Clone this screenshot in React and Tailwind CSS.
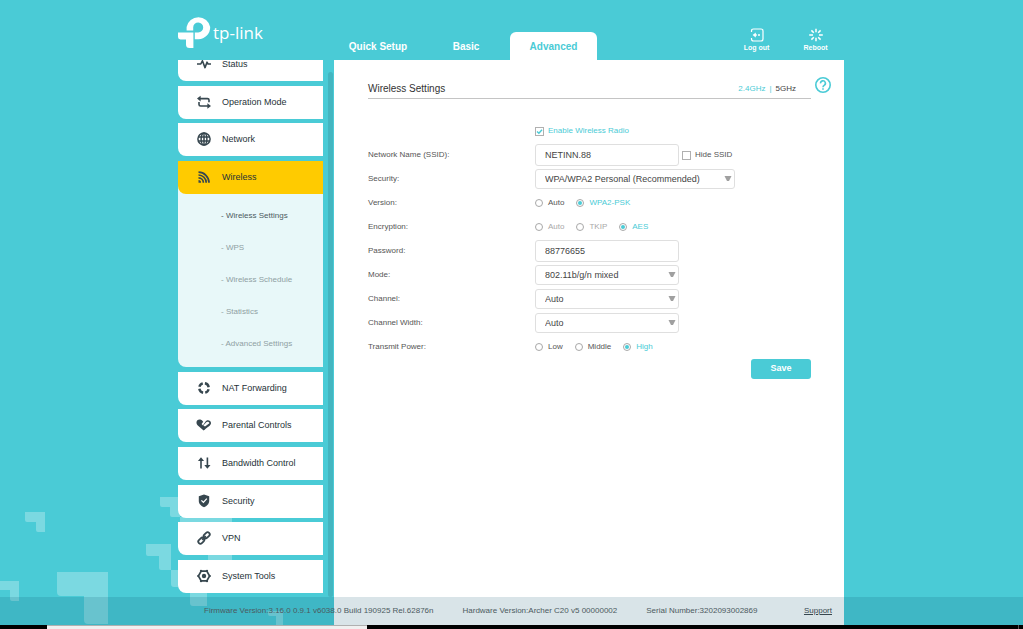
import React from "react";

const cyanText = "text-[#4acbd6]";

function StatusIcon() {
  return (
    <svg viewBox="0 0 14 14" className="size-3.5" fill="none" stroke="currentColor" strokeWidth="1.6" strokeLinejoin="round">
      <path d="M0 7H3.8L5.4 3.8L8 10.6L10 5.2L11 7H14" />
    </svg>
  );
}

function ModeIcon() {
  return (
    <svg viewBox="0 0 14 14" className="size-3.5" fill="none" stroke="currentColor" strokeWidth="1.6">
      <path d="M3 3.6H10.5Q12 3.6 12 5.1V7.2" />
      <path d="M11 11H3.6Q2 11 2 9.4V7" />
      <path d="M3.6 0.8L0 3.6L3.6 6.4Z" fill="currentColor" stroke="none" />
      <path d="M10.4 8.2L14 11L10.4 13.8Z" fill="currentColor" stroke="none" />
    </svg>
  );
}

function GlobeIcon() {
  return (
    <svg viewBox="0 0 14 14" className="size-3.5" fill="none" stroke="currentColor" strokeWidth="1.5">
      <circle cx="7" cy="7" r="6.1" />
      <ellipse cx="7" cy="7" rx="2.9" ry="6.1" />
      <path d="M7 1V13M1 4.9H13M1 9.1H13" />
    </svg>
  );
}

function WirelessIcon() {
  return (
    <svg viewBox="0 0 14 14" className="size-3.5" fill="none" stroke="currentColor" strokeWidth="1.7">
      <path d="M1.5 2.2A10.5 10.5 0 0 1 12 12.7" />
      <path d="M1.5 5A7.7 7.7 0 0 1 9.2 12.7" />
      <path d="M1.5 7.8A4.9 4.9 0 0 1 6.4 12.7" />
      <path d="M1.5 10.1A2.6 2.6 0 0 1 4.1 12.7H1.5Z" fill="currentColor" stroke="none" />
    </svg>
  );
}

function NatIcon() {
  return (
    <svg viewBox="0 0 14 14" className="size-3.5" fill="none" stroke="currentColor" strokeWidth="2.4">
      <path d="M7.9 2.3A4.8 4.8 0 0 1 11.7 6.2" />
      <path d="M11.6 8.2A4.8 4.8 0 0 1 8.2 11.7" />
      <path d="M6.1 11.7A4.8 4.8 0 0 1 2.3 7.8" />
      <path d="M2.4 5.8A4.8 4.8 0 0 1 5.8 2.3" />
    </svg>
  );
}

function HeartsIcon() {
  return (
    <svg viewBox="0 0 16 14" className="h-3.5 w-4">
      <path d="M7.6 12.6L1.8 7.4C-1.2 4.2 1.4 0.8 4.4 1.6Q6 2 7.2 3.8L5.6 6L8.8 9.6L9.8 10.7Z" fill="currentColor" />
      <path d="M7.6 12.1L6.4 8.2L9.2 4C10.6 1.2 14.8 2 15 5C15 7.6 11.4 9.4 7.6 12.1Z" fill="currentColor" />
      <path d="M7.4 7.4L10 4.4C11 3.2 13.2 3.4 13.4 5.2L9 8.4Z" fill="white" />
    </svg>
  );
}

function BandwidthIcon() {
  return (
    <svg viewBox="0 0 14 14" className="size-3.5" fill="none" stroke="currentColor" strokeWidth="1.6">
      <path d="M4 3V12.5M10.4 1.5V11" />
      <path d="M0.9 5L4 1.2L7.1 5Z" fill="currentColor" stroke="none" />
      <path d="M7.3 9L10.4 12.8L13.5 9Z" fill="currentColor" stroke="none" />
    </svg>
  );
}

function ShieldIcon() {
  return (
    <svg viewBox="0 0 14 14" className="size-3.5">
      <path d="M7 0.4L12.2 2.2V6.8C12.2 10.2 9.8 12.2 7 13.2C4.2 12.2 1.8 10.2 1.8 6.8V2.2Z" fill="currentColor" />
      <path d="M4.4 6.4L6.4 8.4L9.8 4.6" fill="none" stroke="white" strokeWidth="1.3" />
    </svg>
  );
}

function VpnIcon() {
  return (
    <svg viewBox="0 0 14 14" className="size-3.5" fill="none" stroke="currentColor" strokeWidth="1.8">
      <rect x="-3.4" y="-2.1" width="6.8" height="4.2" rx="2.1" transform="translate(9.7 4.3) rotate(-45)" />
      <rect x="-3.4" y="-2.1" width="6.8" height="4.2" rx="2.1" transform="translate(4.3 9.7) rotate(-45)" />
      <path d="M5.2 8.8L8.8 5.2" />
    </svg>
  );
}

function GearIcon() {
  return (
    <svg viewBox="0 0 14 14" className="size-3.5">
      <path d="M4.2 2.1H9.8L12.6 7L9.8 11.9H4.2L1.4 7Z" fill="none" stroke="currentColor" strokeWidth="1.7" />
      <g fill="currentColor">
        <circle cx="4" cy="1.8" r="1.1" />
        <circle cx="10" cy="1.8" r="1.1" />
        <circle cx="4" cy="12.2" r="1.1" />
        <circle cx="10" cy="12.2" r="1.1" />
        <circle cx="1.2" cy="7" r="1.1" />
        <circle cx="12.8" cy="7" r="1.1" />
        <circle cx="7" cy="7" r="2.2" />
      </g>
    </svg>
  );
}

function Logo() {
  return (
    <a href="#home" aria-label="tp-link" className="flex items-start text-white">
      <svg viewBox="0 0 34 34" className="size-[34px]" fill="currentColor">
        <path d="M8.6 15.6V12A12 12 0 0 1 32.2 12A12 12 0 0 1 20.4 24.2H16.8V17.4H20.2A5 5 0 1 0 15.2 12.2V15.6Z" />
        <path d="M0 17.4H15.4V33H11.5Q8 33 8 29.5V24.4H2.5Q0 24.4 0 22Z" />
      </svg>
      <span className="mt-[6px] ml-px font-['Open_Sans',sans-serif] text-[17px] leading-6 font-medium">tp-link</span>
    </a>
  );
}

function Backdrop() {
  return (
    <svg viewBox="0 0 300 140" className="absolute bottom-0 left-0 h-[140px] w-[300px]" fill="white" fillOpacity="0.27" aria-hidden="true">
      <path d="M25 23H45V43H38Q36 43 36 41V33H27Q25 33 25 31Z" />
      <path d="M0 92H19V112H12Q10 112 10 110V101H0Z" />
      <path d="M57 83H108V135H88Q84 135 84 131V107H61Q57 107 57 103Z" />
      <path d="M160 8H180V28H172Q170 28 170 26V18H162Q160 18 160 16Z" />
      <path d="M146 55H171V81H161Q159 81 159 79V67H148Q146 67 146 65Z" />
      <path d="M171 81H207V117H193Q190 117 190 114V98H174Q171 98 171 95Z" />
      <path d="M180 28H232V80H212Q208 80 208 76V52H184Q180 52 180 48Z" />
      <path d="M268 122H283V136H276V127H270Q268 127 268 125Z" />
    </svg>
  );
}

const menu = [
  { label: "Status", Icon: StatusIcon },
  { label: "Operation Mode", Icon: ModeIcon },
  { label: "Network", Icon: GlobeIcon },
  {
    label: "Wireless",
    Icon: WirelessIcon,
    children: ["Wireless Settings", "WPS", "Wireless Schedule", "Statistics", "Advanced Settings"],
  },
  { label: "NAT Forwarding", Icon: NatIcon },
  { label: "Parental Controls", Icon: HeartsIcon },
  { label: "Bandwidth Control", Icon: BandwidthIcon },
  { label: "Security", Icon: ShieldIcon },
  { label: "VPN", Icon: VpnIcon },
  { label: "System Tools", Icon: GearIcon },
];

function MenuItem({ label, Icon, children: sub }) {
  return (
    <li className={sub ? "rounded-bl-lg bg-[#e8f8f9]" : ""}>
      <a
        href="#menu"
        className={`flex h-[33px] items-center gap-2.5 rounded-bl-lg pl-[18px] text-[9px] leading-none text-[#263238] ${sub ? "bg-[#ffcb00]" : "bg-white"}`}
      >
        <span className="flex w-4 justify-center pb-px text-[#37474f]">
          <Icon />
        </span>
        {label}
      </a>
      {sub && (
        <ul className="pt-1.5 pb-[7px] pl-[43px] text-[8px]">
          {sub.map((name, i) => (
            <li key={name}>
              <a href="#submenu" className={`flex h-8 items-center ${i === 0 ? "text-[#4c5a60]" : "text-[#8fa0a3]"}`}>
                - {name}
              </a>
            </li>
          ))}
        </ul>
      )}
    </li>
  );
}

function Row({ label, htmlFor, children }) {
  return (
    <div className="grid h-6 grid-cols-[167px_1fr] items-center">
      {htmlFor ? (
        <label htmlFor={htmlFor}>{label}</label>
      ) : (
        <span>{label}</span>
      )}
      <div className="flex items-center">{children}</div>
    </div>
  );
}

function TextBox({ id, value }) {
  return (
    <input
      id={id}
      type="text"
      defaultValue={value}
      className="h-[22px] w-36 rounded-[3px] border border-[#dfdfdf] bg-white px-[9px] text-[9px] text-[#444]"
    />
  );
}

function Select({ id, value, wide }) {
  return (
    <div className={`relative ${wide ? "w-[200px]" : "w-36"}`}>
      <select
        id={id}
        className="block h-5 w-full appearance-none rounded-[3px] border border-[#dfdfdf] bg-white pt-0.5 pr-4 pl-[9px] text-[9px] text-[#444]"
      >
        <option>{value}</option>
      </select>
      <svg viewBox="0 0 8 5" className="pointer-events-none absolute top-[7px] right-[3px] h-[5px] w-2" fill="#a0a0a0">
        <path d="M0.5 0H7.5L5 5H3Z" />
      </svg>
    </div>
  );
}

function Radios({ label, name, options, selected, muted }) {
  return (
    <div role="radiogroup" aria-label={label} className="flex gap-3">
      {options.map((option) => {
        const on = option === selected;
        return (
          <label key={option} className={`flex items-center gap-[5px] ${on ? cyanText : muted ? "text-[#a8a8a8]" : "text-[#555]"}`}>
            <input
              type="radio"
              name={name}
              defaultChecked={on}
              className="size-2 appearance-none rounded-full border border-[#a8a8a8] bg-white p-px checked:bg-[#4acbd6] checked:bg-clip-content"
            />
            {option}
          </label>
        );
      })}
    </div>
  );
}

function Check({ label, checked }) {
  return (
    <label className={`flex items-center gap-1 ${checked ? cyanText : "text-[#555]"}`}>
      <span className="grid">
        <input
          type="checkbox"
          defaultChecked={checked}
          className="col-start-1 row-start-1 size-[9px] appearance-none border border-[#b0b0b0] bg-white"
        />
        {checked && (
          <svg viewBox="0 0 9 9" className="pointer-events-none col-start-1 row-start-1 size-[9px]" fill="none" stroke="#4acbd6" strokeWidth="1.4">
            <path d="M2 4.4L3.9 6.3L7 2.8" />
          </svg>
        )}
      </span>
      {label}
    </label>
  );
}

export default function App() {
  return (
    <div className="relative flex min-h-screen flex-col bg-[#4acbd6] font-['Liberation_Sans',Arial,sans-serif] leading-normal">
      <Backdrop />

      <header className="relative mx-auto flex h-[60px] w-full max-w-[667px] items-end">
        <div className="w-[156px] self-start pt-[15px]">
          <Logo />
        </div>
        <nav className="flex text-[10px] font-bold text-white">
          <a href="#quick" className="flex h-7 w-[88px] items-center justify-center">Quick Setup</a>
          <a href="#basic" className="flex h-7 w-[88px] items-center justify-center">Basic</a>
          <a href="#advanced" className={`flex h-7 w-[87px] items-center justify-center rounded-t-md bg-white ${cyanText}`}>
            Advanced
          </a>
        </nav>
        <div className="ml-auto flex pb-1.5 text-[7px] font-bold text-white">
          <button type="button" className="flex w-[59px] flex-col items-center">
            <svg viewBox="0 0 14 14" className="size-3.5" fill="none" stroke="currentColor" strokeWidth="1.2">
              <path d="M1.5 4V3Q1.5 1 3.5 1H11Q13 1 13 3V11Q13 13 11 13H3.5Q1.5 13 1.5 11V10" />
              <path d="M5 7H6.8M8 7H10" strokeWidth="1.3" />
              <path d="M5.8 4.4V9.6L2.6 7Z" fill="currentColor" stroke="none" />
            </svg>
            <span className="leading-3">Log out</span>
          </button>
          <button type="button" className="flex w-[59px] flex-col items-center">
            <svg viewBox="0 0 14 14" className="size-3.5" fill="none" stroke="currentColor" strokeWidth="1.5">
              <path d="M7 0.8V4.2M7 9.8V13.2M0.2 7H4M10 7H13.8M2.4 2.4L4.8 4.8M9.2 9.2L11.6 11.6M11.6 2.4L9.2 4.8M4.8 9.2L2.4 11.6" />
            </svg>
            <span className="leading-3">Reboot</span>
          </button>
        </div>
      </header>

      <div className="relative mx-auto flex w-full max-w-[667px] flex-1 pr-px">
        <aside className="flex w-[145px] flex-col overflow-hidden pb-8">
          <ul className="-mt-3 flex flex-1 flex-col justify-between">
            {menu.map((item) => (
              <MenuItem key={item.label} {...item} />
            ))}
          </ul>
        </aside>
        <div className="mr-px ml-[5px] flex w-[5px] flex-col pt-3 pb-7">
          <div className="flex-1 rounded-full bg-[#43b5c0]" />
        </div>

        <main className="flex-1 bg-white pt-[17px] pr-[13px] pb-9 pl-[34px] text-[8px] text-[#555]">
          <div className="flex items-start gap-1">
            <div className="flex h-[22px] flex-1 items-center justify-between border-b border-[#c4c4c4] pt-0.5">
              <h1 className="text-[10px] text-[#333]">Wireless Settings</h1>
              <div className="flex gap-1 pr-[15px]">
                <a href="#band24" className={cyanText}>2.4GHz</a>
                <span className={cyanText}>|</span>
                <a href="#band5" className="text-[#444]">5GHz</a>
              </div>
            </div>
            <button type="button" aria-label="Help" className={cyanText}>
              <svg viewBox="0 0 16 16" className="size-4" fill="none" stroke="currentColor" strokeWidth="1.6">
                <circle cx="8" cy="8" r="7.2" />
                <path d="M5.6 6.4A2.4 2.4 0 1 1 9.3 8.2Q8 9 8 10.2" />
                <path d="M8 11.2V12.8" />
              </svg>
            </button>
          </div>

          <form className="mt-5 mr-5">
            <Row>
              <Check label="Enable Wireless Radio" checked />
            </Row>
            <Row label="Network Name (SSID):" htmlFor="ssid">
              <TextBox id="ssid" value="NETINN.88" />
              <div className="ml-[3px]">
                <Check label="Hide SSID" />
              </div>
            </Row>
            <Row label="Security:" htmlFor="security">
              <Select id="security" value="WPA/WPA2 Personal (Recommended)" wide />
            </Row>
            <Row label="Version:">
              <Radios label="Version" name="version" options={["Auto", "WPA2-PSK"]} selected="WPA2-PSK" />
            </Row>
            <Row label="Encryption:">
              <Radios label="Encryption" name="encryption" options={["Auto", "TKIP", "AES"]} selected="AES" muted />
            </Row>
            <Row label="Password:" htmlFor="password">
              <TextBox id="password" value="88776655" />
            </Row>
            <Row label="Mode:" htmlFor="mode">
              <Select id="mode" value="802.11b/g/n mixed" />
            </Row>
            <Row label="Channel:" htmlFor="channel">
              <Select id="channel" value="Auto" />
            </Row>
            <Row label="Channel Width:" htmlFor="width">
              <Select id="width" value="Auto" />
            </Row>
            <Row label="Transmit Power:">
              <Radios label="Transmit Power" name="power" options={["Low", "Middle", "High"]} selected="High" />
            </Row>
            <div className="flex justify-end">
              <button type="button" className="h-5 w-[60px] rounded-[3px] bg-[#4acbd6] text-[9px] font-bold text-white">
                Save
              </button>
            </div>
          </form>
        </main>
      </div>

      <div className="h-1" />
      <footer className="absolute inset-x-0 bottom-0">
        <div className="bg-[rgba(0,75,100,0.15)]">
          <div className="mx-auto flex h-7 w-full max-w-[667px] items-center gap-[29px] pr-[13px] pl-[26px] text-[8px] text-[#4c5a60]">
            <span>Firmware Version:3.16.0 0.9.1 v6038.0 Build 190925 Rel.62876n</span>
            <span>Hardware Version:Archer C20 v5 00000002</span>
            <span>Serial Number:3202093002869</span>
            <a href="#support" className="ml-auto text-[#37474f] underline">Support</a>
          </div>
        </div>
        <div className="flex h-1 bg-black pr-1 pl-[47px]">
          <div className="w-80 border-t border-[#b0b0b0] bg-[#f0f0f0]" />
          <div className="ml-auto w-px bg-[#555]" />
        </div>
      </footer>
    </div>
  );
}
